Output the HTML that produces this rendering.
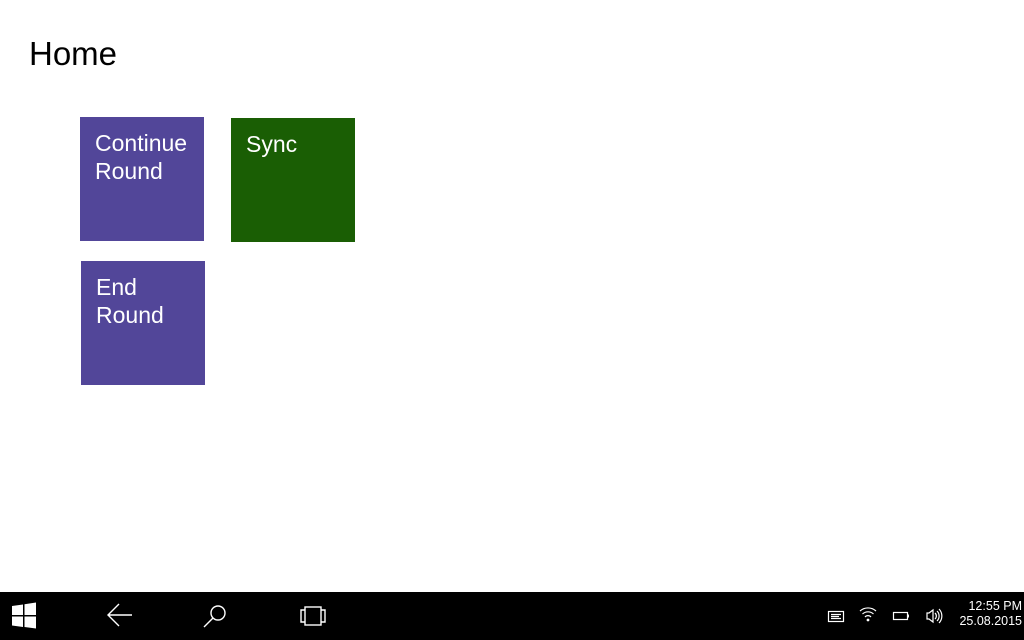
<!DOCTYPE html>
<html><head><style>
body{margin:0;width:1024px;height:640px;background:#fff;position:relative;overflow:hidden;font-family:"Liberation Sans",sans-serif}
h1{position:absolute;left:29px;top:35px;margin:0;font-weight:normal;font-size:33px;color:#000}
.t{position:absolute;width:124px;height:124px;color:#fff;font-size:23px;line-height:28px;box-sizing:border-box;padding:12px 15px}
.bar{position:absolute;left:0;top:592px;width:1024px;height:48px;background:#000}
svg{position:absolute}
.clk{position:absolute;right:2px;top:599px;color:#fff;font-size:12.5px;line-height:15px;text-align:right}
</style></head><body>
<h1>Home</h1>
<div class="t" style="left:80px;top:117px;background:#524699">Continue Round</div>
<div class="t" style="left:231px;top:118px;background:#1a5e04">Sync</div>
<div class="t" style="left:81px;top:261px;background:#524699">End Round</div>
<div class="bar"></div>
<svg style="left:0;top:592px" width="340" height="48" fill="none" stroke="#fff" stroke-width="1.4">
<path d="M12 606L23 604.5V615H12ZM24.5 604.3L36 602.5V615H24.5ZM12 616.5H23V627L12 625.5ZM24.5 616.5H36V628.5L24.5 627Z" fill="#fff" stroke="none" transform="translate(0,-592)"/>
<path d="M108 23H132M119 12L108 23L119 34"/>
<circle cx="218" cy="21" r="7"/><path d="M213 26L204 35"/>
<rect x="305" y="15" width="16" height="18"/><path d="M305 18H301V30H305M321 18H325V30H321"/>
</svg>
<svg style="left:814px;top:592px" width="130" height="48" fill="none" stroke="#fff" stroke-width="1.2">
<rect x="14.5" y="19.5" width="15" height="10"/><path d="M17 22.5H27M17 24.5H25M17 26.5H27"/>
<path d="M46 19a12 12 0 0 1 16 0M48.5 22a8 8 0 0 1 11 0M51 25a4 4 0 0 1 6 0"/><circle cx="54" cy="28" r="0.8" fill="#fff"/>
<rect x="79.5" y="20.5" width="14" height="7"/><path d="M94 22.5v3" stroke-width="2"/>
<path d="M113 21h2l4-3v12l-4-3h-2z"/><path d="M121 21a4 4 0 0 1 0 6M123 19a7 7 0 0 1 0 10M125 17a10 10 0 0 1 0 14"/>
</svg>
<div class="clk">12:55 PM<br>25.08.2015</div>
</body></html>
